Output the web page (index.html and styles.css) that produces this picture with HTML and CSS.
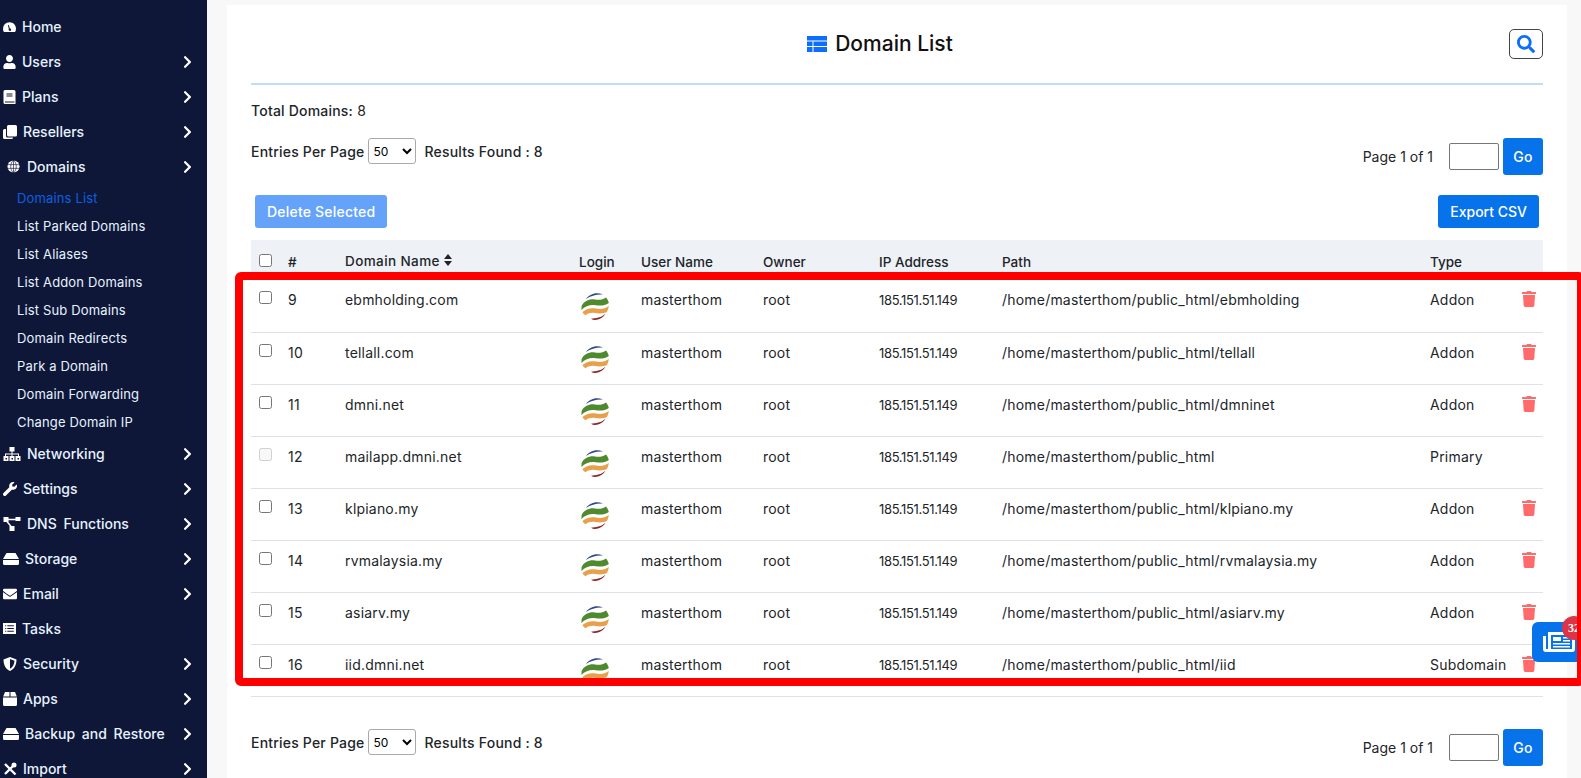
FILE: index.html
```html
<!DOCTYPE html>
<html>

<head>
  <title>Domain List</title>
  <link rel="stylesheet" href="styles.css">
</head>

<body>
  <svg class="icon-defs" xmlns="http://www.w3.org/2000/svg">
    <symbol id="i-chev" viewBox="0 0 320 512"><path d="M285.476 272.971L91.132 467.314c-9.373 9.373-24.569 9.373-33.941 0l-22.667-22.667c-9.357-9.357-9.375-24.522-.04-33.901L188.505 256 34.484 101.255c-9.335-9.379-9.317-24.544.04-33.901l22.667-22.667c9.373-9.373 24.569-9.373 33.941 0L285.475 239.03c9.373 9.372 9.373 24.568.001 33.941z"/></symbol>
    <symbol id="i-trash" viewBox="0 0 448 512"><path d="M432 32H312l-9.4-18.7A24 24 0 0 0 281.1 0H166.8a23.72 23.72 0 0 0-21.4 13.3L136 32H16A16 16 0 0 0 0 48v32a16 16 0 0 0 16 16h416a16 16 0 0 0 16-16V48a16 16 0 0 0-16-16zM53.2 467a48 48 0 0 0 47.9 45h245.8a48 48 0 0 0 47.9-45L416 128H32z"/></symbol>
    <symbol id="i-logo" viewBox="0 0 28 28">
      <path fill="#2f4a8c" d="M5 7C8 2.500 15 -.5 22 2.500 16 2 10 3.500 5 7z"/>
      <path fill="#4f8a2e" d="M.6 14C3 9 9 6.500 14 7.500c4 .8 8 .2 11-2 1.500 1.800 2.400 3.500 2.800 5.500-4 2.800-8.500 3-13 2.200C10 12.300 4.500 13.500.4 18z"/>
      <path fill="#e9a04a" d="M1.500 20C5 16.500 10 15.500 15 16.500c4 .8 9 .6 12.800-2.500-.3 2.500-1 4.500-2 6-3.500 1.800-8 1.600-11.500 1-3.500-.6-7 0-9.800 2.200C3 22.500 2 21.200 1.500 20z"/>
      <path fill="#8c2326" d="M10 26.800c5-.5 10-1 14.500-5-2.500 4-6.500 6.200-10.500 6.200-1.400 0-2.800-.4-4-1.200z"/>
    </symbol>
    <symbol id="i-hdd" viewBox="0 0 16 12"><path d="M3.500 0h9L16 6H0zM0 7h16v3.500a1.500 1.500 0 0 1-1.500 1.500h-13A1.500 1.500 0 0 1 0 10.500z"/></symbol>
  </svg>

  <aside class="sidebar">
    <a class="nav-item">
      <svg class="nav-icon" viewBox="0 0 16 14" width="13" height="12"><path fill="#fff" fill-rule="evenodd" d="M8 1a8 8 0 0 0-8 8c0 1.500.4 2.900 1.100 4h13.800A8 8 0 0 0 8 1zm-.8 8.500L6 4.500h1l1.500 4.300a1.500 1.500 0 1 1-1.300.7z"/></svg>
      <span>Home</span>
    </a>
    <a class="nav-item">
      <svg class="nav-icon" viewBox="0 0 448 512" width="13" height="14"><path fill="#fff" d="M224 256c70.700 0 128-57.300 128-128S294.700 0 224 0 96 57.300 96 128s57.300 128 128 128zm89.600 32h-16.700c-22.200 10.200-46.900 16-72.900 16s-50.600-5.800-72.900-16h-16.700C60.200 288 0 348.200 0 422.400V464c0 26.500 21.500 48 48 48h352c26.500 0 48-21.500 48-48v-41.600c0-74.200-60.200-134.400-134.400-134.400z"/></svg>
      <span>Users</span>
      <svg class="chev"><use href="#i-chev"/></svg>
    </a>
    <a class="nav-item">
      <svg class="nav-icon" viewBox="0 0 12 14" width="13" height="14"><path fill="#fff" fill-rule="evenodd" d="M1.500 0h9A1.500 1.500 0 0 1 12 1.500V14H1.500A1.500 1.500 0 0 1 0 12.500v-11A1.500 1.500 0 0 1 1.500 0zM3 3.500v1h6v-1zm0 2v1h6v-1zM1.500 11.500v1H11v-1z"/></svg>
      <span>Plans</span>
      <svg class="chev"><use href="#i-chev"/></svg>
    </a>
    <a class="nav-item">
      <svg class="nav-icon" viewBox="0 0 14 14" width="14" height="14"><path fill="#fff" d="M4 1.500A1.500 1.500 0 0 1 5.500 0H12.500A1.500 1.500 0 0 1 14 1.500v8.500A1.500 1.500 0 0 1 12.500 11.500H5.500A1.500 1.500 0 0 1 4 10zM0 5.500A1.500 1.500 0 0 1 1.500 4H3v7a1.500 1.500 0 0 0 1.500 1.500H10v0A1.500 1.500 0 0 1 8.500 14h-7A1.500 1.500 0 0 1 0 12.500z"/></svg>
      <span>Resellers</span>
      <svg class="chev"><use href="#i-chev"/></svg>
    </a>
    <a class="nav-item nav-indent">
      <svg class="nav-icon" viewBox="0 0 14 14" width="13" height="13"><circle cx="7" cy="7" r="6.500" fill="#fff"/><path fill="none" stroke="#0f1738" stroke-width=".7" d="M0 5h14M0 9h14M7 0v14M7 0C3 4 3 10 7 14M7 0c4 4 4 10 0 14"/></svg>
      <span>Domains</span>
      <svg class="chev"><use href="#i-chev"/></svg>
    </a>
    <div class="subnav">
      <a class="sub-item sub-active">Domains List</a>
      <a class="sub-item">List Parked Domains</a>
      <a class="sub-item">List Aliases</a>
      <a class="sub-item">List Addon Domains</a>
      <a class="sub-item">List Sub Domains</a>
      <a class="sub-item">Domain Redirects</a>
      <a class="sub-item">Park a Domain</a>
      <a class="sub-item">Domain Forwarding</a>
      <a class="sub-item">Change Domain IP</a>
    </div>
    <a class="nav-item">
      <svg class="nav-icon" viewBox="0 0 17 14" width="18" height="14"><path fill="#fff" fill-rule="evenodd" d="M6 0h5v4.500H9V6.500h6.500v2.500H17v5h-5V9h2.500V7.500h-5.500V9H11v5H6V9h2V7.500H2.500V9H5v5H0V9h1.500V6.500H8V4.500H6zM2 11v1.500h1.500V11zm6 0v1.500h1.500V11zm6 0v1.500h1.500V11z"/></svg>
      <span>Networking</span>
      <svg class="chev"><use href="#i-chev"/></svg>
    </a>
    <a class="nav-item">
      <svg class="nav-icon" viewBox="0 0 512 512" width="14" height="14"><path fill="#fff" d="M507.730 109.100c-2.240-9.030-13.540-12.090-20.120-5.510l-74.360 74.360-67.880-11.310-11.310-67.880 74.360-74.360c6.620-6.620 3.430-17.900-5.660-20.160-47.38-11.740-99.550.91-136.580 37.930-39.640 39.640-50.550 97.100-34.050 147.200L18.740 402.760c-24.990 24.990-24.990 65.510 0 90.500 24.990 24.990 65.510 24.990 90.500 0l213.210-213.210c50.120 16.710 107.470 5.680 147.370-34.220 37.070-37.070 49.700-89.320 37.910-136.730z"/></svg>
      <span>Settings</span>
      <svg class="chev"><use href="#i-chev"/></svg>
    </a>
    <a class="nav-item">
      <svg class="nav-icon" viewBox="0 0 17 14" width="18" height="14"><path fill="#fff" d="M0 0h5v5H0zM12 0h5v4h-5zM6 9h5v5H6z"/><path fill="none" stroke="#fff" stroke-width="1.400" d="M4 2.500h9M3 4l5 6"/></svg>
      <span>DNS Functions</span>
      <svg class="chev"><use href="#i-chev"/></svg>
    </a>
    <a class="nav-item">
      <svg class="nav-icon nav-hdd"><use href="#i-hdd" fill="#fff"/></svg>
      <span>Storage</span>
      <svg class="chev"><use href="#i-chev"/></svg>
    </a>
    <a class="nav-item">
      <svg class="nav-icon" viewBox="0 0 512 512" width="14" height="14"><path fill="#fff" d="M502.300 190.800c3.900-3.100 9.700-.2 9.700 4.700V400c0 26.500-21.500 48-48 48H48c-26.500 0-48-21.500-48-48V195.600c0-5 5.700-7.800 9.700-4.700 22.400 17.400 52.100 39.500 154.100 113.600 21.100 15.400 56.700 47.800 92.200 47.600 35.700.3 72-32.800 92.300-47.600 102-74.100 131.600-96.300 154-113.700zM256 320c23.200.4 56.600-29.200 73.400-41.400 132.700-96.300 142.800-104.700 173.400-128.700 5.800-4.500 9.200-11.500 9.200-18.900v-19c0-26.500-21.500-48-48-48H48C21.500 64 0 85.500 0 112v19c0 7.400 3.400 14.300 9.200 18.900 30.600 23.900 40.700 32.400 173.400 128.700 16.800 12.200 50.200 41.800 73.400 41.400z"/></svg>
      <span>Email</span>
      <svg class="chev"><use href="#i-chev"/></svg>
    </a>
    <a class="nav-item">
      <svg class="nav-icon" viewBox="0 0 12 10" width="13" height="11"><path fill="#fff" fill-rule="evenodd" d="M0 0h12v10H0zM2 2v1h1V2zm2 0v1h6V2zM2 4.500v1h1v-1zm2 0v1h6v-1zM2 7v1h1V7zm2 0v1h6V7z"/></svg>
      <span>Tasks</span>
    </a>
    <a class="nav-item">
      <svg class="nav-icon" viewBox="0 0 14 14" width="14" height="14"><path fill="#fff" fill-rule="evenodd" d="M7 0l6.500 2.500C13.500 8 11 12.500 7 14 3 12.500.5 8 .5 2.500zm0 2v9.700c2.500-1.200 4.300-4.200 4.500-7.900z"/></svg>
      <span>Security</span>
      <svg class="chev"><use href="#i-chev"/></svg>
    </a>
    <a class="nav-item">
      <svg class="nav-icon" viewBox="0 0 14 14" width="14" height="14"><path fill="#fff" d="M2 0h4.500v4.500H.2zM7.500 0H12l1.800 4.500H7.500zM0 5.500h14V12.500A1.500 1.500 0 0 1 12.500 14h-11A1.500 1.500 0 0 1 0 12.500z"/></svg>
      <span>Apps</span>
      <svg class="chev"><use href="#i-chev"/></svg>
    </a>
    <a class="nav-item">
      <svg class="nav-icon nav-hdd"><use href="#i-hdd" fill="#fff"/></svg>
      <span>Backup and Restore</span>
      <svg class="chev"><use href="#i-chev"/></svg>
    </a>
    <a class="nav-item">
      <svg class="nav-icon" viewBox="0 0 14 14" width="14" height="14"><path fill="none" stroke="#fff" stroke-width="2.400" d="M2 2l10.500 10.500M12 2L2 12"/><circle cx="11" cy="3" r="2.500" fill="#fff"/></svg>
      <span>Import</span>
      <svg class="chev"><use href="#i-chev"/></svg>
    </a>
  </aside>

  <main class="content">
    <section class="card">
      <header class="card-head">
        <h1 class="card-title">
          <svg class="title-icon" viewBox="0 0 20 16" width="20" height="16"><path fill="#0d6efd" d="M0 0h20v4.500H0zM0 5.500h5.500v4.500H0zM6.500 5.500H20v4.500H6.500zM0 11h5.500v5H0zM6.500 11H20v5H6.500z"/></svg>
          Domain List
        </h1>
        <button class="search-btn" type="button">
          <svg viewBox="0 0 512 512" width="18" height="18"><path fill="#0d6efd" d="M505 442.700L405.300 343c-4.500-4.500-10.600-7-17-7H372c27.600-35.300 44-79.700 44-128C416 93.100 322.900 0 208 0S0 93.100 0 208s93.100 208 208 208c48.300 0 92.700-16.400 128-44v16.300c0 6.400 2.500 12.500 7 17l99.700 99.700c9.400 9.400 24.600 9.400 33.900 0l28.300-28.300c9.400-9.400 9.400-24.600.1-34zM208 336c-70.700 0-128-57.200-128-128 0-70.700 57.200-128 128-128 70.700 0 128 57.200 128 128 0 70.700-57.200 128-128 128z"/></svg>
        </button>
      </header>

      <p class="total"><b>Total Domains:</b> 8</p>

      <div class="pager-row">
        <div class="entries">
          <b>Entries Per Page</b>
          <select class="per-page"><option>50</option></select>
          <b>Results Found : 8</b>
        </div>
        <div class="pager">
          <span class="page-label">Page 1 of 1</span>
          <input class="page-input" type="text">
          <button class="btn go-btn" type="button">Go</button>
        </div>
      </div>

      <div class="actions">
        <button class="btn btn-faded" type="button">Delete Selected</button>
        <button class="btn btn-export" type="button">Export CSV</button>
      </div>

      <div class="table-wrap">
        <table class="domains">
          <thead>
            <tr>
              <th class="c-check"><input type="checkbox"></th>
              <th class="c-num">#</th>
              <th class="c-name">Domain Name
                <svg viewBox="0 0 8 12" width="8" height="12"><path fill="#222" d="M4 0l4 5H0zM4 12L0 7h8z"/></svg>
              </th>
              <th class="c-login">Login</th>
              <th class="c-user">User Name</th>
              <th class="c-owner">Owner</th>
              <th class="c-ip">IP Address</th>
              <th class="c-path">Path</th>
              <th class="c-type">Type</th>
              <th class="c-del"></th>
            </tr>
          </thead>
          <tbody>
            <tr>
              <td><input type="checkbox"></td><td>9</td><td>ebmholding.com</td>
              <td class="td-logo"><svg class="logo"><use href="#i-logo"/></svg></td>
              <td>masterthom</td><td>root</td><td class="td-ip">185.151.51.149</td>
              <td>/home/masterthom/public_html/ebmholding</td><td>Addon</td>
              <td><svg class="trash"><use href="#i-trash"/></svg></td>
            </tr>
            <tr>
              <td><input type="checkbox"></td><td>10</td><td>tellall.com</td>
              <td class="td-logo"><svg class="logo"><use href="#i-logo"/></svg></td>
              <td>masterthom</td><td>root</td><td class="td-ip">185.151.51.149</td>
              <td>/home/masterthom/public_html/tellall</td><td>Addon</td>
              <td><svg class="trash"><use href="#i-trash"/></svg></td>
            </tr>
            <tr>
              <td><input type="checkbox"></td><td>11</td><td>dmni.net</td>
              <td class="td-logo"><svg class="logo"><use href="#i-logo"/></svg></td>
              <td>masterthom</td><td>root</td><td class="td-ip">185.151.51.149</td>
              <td>/home/masterthom/public_html/dmninet</td><td>Addon</td>
              <td><svg class="trash"><use href="#i-trash"/></svg></td>
            </tr>
            <tr>
              <td><input type="checkbox" disabled></td><td>12</td><td>mailapp.dmni.net</td>
              <td class="td-logo"><svg class="logo"><use href="#i-logo"/></svg></td>
              <td>masterthom</td><td>root</td><td class="td-ip">185.151.51.149</td>
              <td>/home/masterthom/public_html</td><td>Primary</td>
              <td></td>
            </tr>
            <tr>
              <td><input type="checkbox"></td><td>13</td><td>klpiano.my</td>
              <td class="td-logo"><svg class="logo"><use href="#i-logo"/></svg></td>
              <td>masterthom</td><td>root</td><td class="td-ip">185.151.51.149</td>
              <td>/home/masterthom/public_html/klpiano.my</td><td>Addon</td>
              <td><svg class="trash"><use href="#i-trash"/></svg></td>
            </tr>
            <tr>
              <td><input type="checkbox"></td><td>14</td><td>rvmalaysia.my</td>
              <td class="td-logo"><svg class="logo"><use href="#i-logo"/></svg></td>
              <td>masterthom</td><td>root</td><td class="td-ip">185.151.51.149</td>
              <td>/home/masterthom/public_html/rvmalaysia.my</td><td>Addon</td>
              <td><svg class="trash"><use href="#i-trash"/></svg></td>
            </tr>
            <tr>
              <td><input type="checkbox"></td><td>15</td><td>asiarv.my</td>
              <td class="td-logo"><svg class="logo"><use href="#i-logo"/></svg></td>
              <td>masterthom</td><td>root</td><td class="td-ip">185.151.51.149</td>
              <td>/home/masterthom/public_html/asiarv.my</td><td>Addon</td>
              <td><svg class="trash"><use href="#i-trash"/></svg></td>
            </tr>
            <tr>
              <td><input type="checkbox"></td><td>16</td><td>iid.dmni.net</td>
              <td class="td-logo"><svg class="logo"><use href="#i-logo"/></svg></td>
              <td>masterthom</td><td>root</td><td class="td-ip">185.151.51.149</td>
              <td>/home/masterthom/public_html/iid</td><td>Subdomain</td>
              <td><svg class="trash"><use href="#i-trash"/></svg></td>
            </tr>
          </tbody>
        </table>
      </div>

      <div class="pager-row pager-bottom">
        <div class="entries">
          <b>Entries Per Page</b>
          <select class="per-page"><option>50</option></select>
          <b>Results Found : 8</b>
        </div>
        <div class="pager">
          <span class="page-label">Page 1 of 1</span>
          <input class="page-input" type="text">
          <button class="btn go-btn" type="button">Go</button>
        </div>
      </div>
    </section>
  </main>

  <button class="news-btn" type="button">
    <svg viewBox="0 0 32 20" width="32" height="20"><path fill="#fff" fill-rule="evenodd" d="M5 0h27v17a3 3 0 0 1-3 3H3a3 3 0 0 1-3-3V4h3v13h2zM8 3v14h21V3zM10 5h8v4h-8zM20 5h7v1.500h-7zM20 8h7v1.500h-7zM10 11h17v1.500H10zM10 14h17v1.500H10z"/></svg>
    <span class="news-badge">32</span>
  </button>

  <div class="highlight"></div>
</body>

</html>
```
FILE: styles.css
```css
* {
  box-sizing: border-box;
}

html,
body {
  height: 778px;
  margin: 0;
  overflow: hidden;
}

body {
  display: flex;
  font-family: Inter, "Liberation Sans", sans-serif;
  font-size: 14px;
  letter-spacing: .2px;
  color: #212529;
  background-color: #f8f8f8;
}

.icon-defs {
  display: none;
}

/* sidebar */
.sidebar {
  flex: 0 0 207px;
  height: 778px;
  padding-top: 9px;
  overflow: hidden;
  background-color: #0f1738;
  color: #e6f3ff;
}

.nav-item {
  display: flex;
  align-items: center;
  height: 35px;
  padding-left: 3px;
  gap: 6px;
  font-size: 14px;
  font-weight: 500;
  letter-spacing: 0;
  word-spacing: 3px;
}

.nav-item .chev {
  margin-left: auto;
  margin-right: 15px;
}

.nav-indent {
  padding-left: 7px;
  gap: 7px;
}

.nav-icon {
  flex: none;
}

.nav-hdd {
  width: 16px;
  height: 12px;
}

.chev {
  width: 9px;
  height: 14px;
  fill: #fff;
}

.subnav {
  display: flex;
  flex-direction: column;
}

.sub-item {
  display: block;
  height: 28px;
  line-height: 28px;
  padding-left: 17px;
  font-size: 13px;
  letter-spacing: .15px;
}

.sub-active {
  color: #0d5fe0;
}

/* main card */
.content {
  flex: 1;
  min-width: 0;
  padding: 5px 14px 0 20px;
}

.card {
  height: 773px;
  padding: 0 24px;
  overflow: hidden;
  background: #fff;
}

.card-head {
  display: flex;
  align-items: center;
  height: 80px;
  border-bottom: 2px solid #bfdcf8;
}

.card-title {
  display: flex;
  flex: 1;
  align-items: center;
  justify-content: center;
  gap: 8px;
  margin: 0;
  padding-bottom: 1px;
  font-size: 21px;
  font-weight: 500;
  letter-spacing: 0;
  color: #111;
}

.search-btn {
  display: flex;
  align-items: center;
  justify-content: center;
  width: 34px;
  height: 30px;
  padding: 0;
  margin-bottom: 1px;
  background: #fff;
  border: 1px solid #444;
  border-radius: 5px;
}

.total {
  margin: 16px 0 0;
  line-height: 20px;
}

b {
  font-weight: 500;
}

.pager-row {
  display: flex;
  justify-content: space-between;
  margin-top: 17px;
  height: 37px;
}

.entries {
  display: flex;
  align-items: center;
  gap: 4px;
  height: 26px;
}

.per-page {
  width: 48px;
  height: 26px;
  margin-right: 4px;
  font-size: 12px;
  font-family: inherit;
  background: #fff;
  border: 1px solid #aaa;
  border-radius: 3px;
}

.pager {
  display: flex;
  align-items: center;
}

.page-label {
  margin-right: 16px;
  letter-spacing: 0;
}

.page-input {
  width: 50px;
  height: 27px;
  margin-right: 4px;
  background: #fff;
  border: 1px solid #777;
  border-radius: 2px;
}

.btn {
  height: 33px;
  padding: 0 12px;
  font-family: inherit;
  font-size: 14px;
  font-weight: 500;
  letter-spacing: .2px;
  color: #fff;
  background-color: #0773ea;
  border: none;
  border-radius: 3px;
}

.btn-export {
  letter-spacing: 0;
}

.go-btn {
  width: 40px;
  height: 37px;
  padding: 0;
}

.btn-faded {
  background-color: #65a3fb;
}

.actions {
  display: flex;
  justify-content: space-between;
  margin-top: 20px;
  padding: 0 4px;
}

/* table */
.table-wrap {
  height: 457px;
  margin-top: 12px;
  overflow: hidden;
  border-bottom: 1px solid #dee2e6;
}

.domains {
  width: 100%;
  table-layout: fixed;
  border-collapse: collapse;
}

.domains th {
  height: 40px;
  padding: 4px 0 0 8px;
  text-align: left;
  font-size: 13.5px;
  font-weight: 500;
  letter-spacing: 0;
  background-color: #eef1f6;
}

.domains th.c-name {
  padding-top: 2px;
  letter-spacing: .4px;
}

.domains td {
  height: 52px;
  padding: 11px 0 0 8px;
  vertical-align: top;
  border-bottom: 1px solid #dee2e6;
}

.domains td.td-ip {
  padding-top: 12px;
  font-size: 13px;
  letter-spacing: -.35px;
}

.domains input {
  margin: 0;
  width: 13px;
  height: 13px;
}

.domains td input {
  display: block;
}

.c-check { width: 29px; }
.c-num { width: 57px; }
.c-name { width: 234px; }
.c-login { width: 62px; }
.c-user { width: 122px; }
.c-owner { width: 116px; }
.c-ip { width: 123px; }
.c-path { width: 428px; }
.c-type { width: 88px; }

.domains td.td-logo {
  padding-top: 12px;
}

.logo {
  display: block;
  width: 28px;
  height: 28px;
  margin-left: 2px;
}

.trash {
  display: block;
  width: 14px;
  height: 16px;
  margin-left: 4px;
  fill: #ff6b6b;
}

.pager-bottom {
  margin-top: 32px;
}

/* floating bits */
.news-btn {
  position: absolute;
  left: 1532px;
  top: 622px;
  display: flex;
  align-items: center;
  width: 60px;
  height: 40px;
  padding: 0 0 0 11px;
  background-color: #0773ea;
  border: none;
  border-radius: 6px;
}

.news-badge {
  position: absolute;
  left: 30px;
  top: -6px;
  width: 24px;
  height: 24px;
  line-height: 24px;
  text-align: center;
  font-family: "Liberation Serif", serif;
  font-size: 12px;
  font-weight: 700;
  color: #fff;
  background-color: #dc3545;
  border-radius: 50%;
}

.highlight {
  position: absolute;
  left: 235px;
  top: 272px;
  width: 1350px;
  height: 414px;
  border: 8px solid #ff0000;
  border-radius: 6px;
  pointer-events: none;
}
```
